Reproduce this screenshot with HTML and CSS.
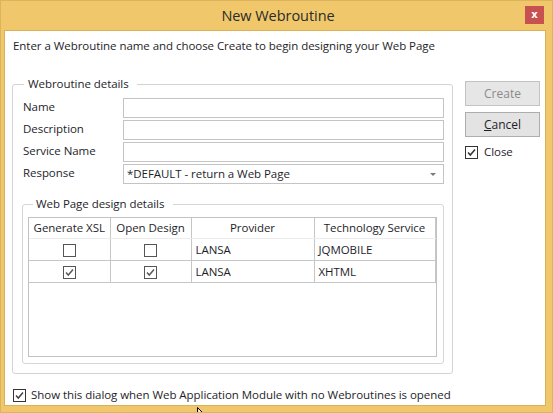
FILE: index.html
```html
<!DOCTYPE html>
<html>
<head>
<meta charset="utf-8">
<link rel="stylesheet" href="styles.css">
</head>
<body>
<div class="window">
  <div class="titlebar">
    <span></span>
    <span class="title">New Webroutine</span>
    <button class="close">x</button>
  </div>
  <div class="client">
    <p class="intro">Enter a Webroutine name and choose Create to begin designing your Web Page</p>
    <div class="main">
      <fieldset class="group outer">
        <legend>Webroutine details</legend>
        <div class="form">
          <span class="lbl">Name</span><div class="input"></div>
          <span class="lbl">Description</span><div class="input"></div>
          <span class="lbl">Service Name</span><div class="input"></div>
          <span class="lbl">Response</span>
          <div class="input combo"><span>*DEFAULT - return a Web Page</span><span class="arrow"></span></div>
        </div>
        <fieldset class="group inner">
          <legend>Web Page design details</legend>
          <div class="grid">
            <table>
              <colgroup><col class="c1"><col class="c2"><col class="c3"><col class="c4"></colgroup>
              <thead>
                <tr><th>Generate XSL</th><th>Open Design</th><th>Provider</th><th>Technology Service</th></tr>
              </thead>
              <tbody>
                <tr>
                  <td class="ck"><span class="box"></span></td>
                  <td class="ck"><span class="box"></span></td>
                  <td>LANSA</td><td>JQMOBILE</td>
                </tr>
                <tr>
                  <td class="ck"><span class="box"><svg viewBox="0 0 11 11" width="11" height="11"><path d="M2 5.5 L4.3 8 L9 2.5" fill="none" stroke="#5a5a5a" stroke-width="1.5"/></svg></span></td>
                  <td class="ck"><span class="box"><svg viewBox="0 0 11 11" width="11" height="11"><path d="M2 5.5 L4.3 8 L9 2.5" fill="none" stroke="#5a5a5a" stroke-width="1.5"/></svg></span></td>
                  <td>LANSA</td><td>XHTML</td>
                </tr>
              </tbody>
            </table>
          </div>
        </fieldset>
      </fieldset>
      <div class="actions">
        <button class="btn disabled">Create</button>
        <button class="btn"><u>C</u>ancel</button>
        <div class="check"><span class="box dark"><svg viewBox="0 0 11 11" width="11" height="11"><path d="M2 5.5 L4.3 8 L9 2.5" fill="none" stroke="#333" stroke-width="1.5"/></svg></span>Close</div>
      </div>
    </div>
    <div class="check bottom"><span class="box dark"><svg viewBox="0 0 11 11" width="11" height="11"><path d="M2 5.5 L4.3 8 L9 2.5" fill="none" stroke="#444" stroke-width="1.5"/></svg></span>Show this dialog when Web Application Module with no Webroutines is opened</div>
  </div>
  <svg class="cursor" width="12" height="8" viewBox="0 0 12 8"><path d="M0.5 0.5 L0.5 8 M0.5 0.5 L7 7" fill="#fff" stroke="#000" stroke-width="1"/><path d="M1.5 2 L1.5 8 L5.5 8 Z" fill="#fff"/></svg>
</div>
</body>
</html>
```
FILE: styles.css
```css
html, body {
  margin: 0;
  padding: 0;
}
body {
  font-family: "Open Sans", "Noto Sans", sans-serif;
  font-size: 11.5px;
  letter-spacing: -0.05px;
  color: #1e1e2a;
  background: #f0c86b;
}
.window {
  position: relative;
  width: 553px;
  height: 413px;
  box-sizing: border-box;
  background: #f0c86b;
  border: 1px solid #dcb45e;
  padding: 0 6px 6px 3px;
  display: flex;
  flex-direction: column;
  overflow: hidden;
}
.titlebar {
  height: 29px;
  flex: none;
  display: grid;
  grid-template-columns: 1fr auto 1fr;
  align-items: start;
}
.title {
  font-size: 14.5px;
  line-height: 20px;
  margin-top: 5px;
  color: #2b2b2b;
  margin-left: 6px;
}
.close {
  justify-self: end;
  margin: 5px 2px 0 0;
  width: 19px;
  height: 18px;
  border: none;
  padding: 0;
  background: #c75050;
  color: #fff;
  font-family: "DejaVu Sans", sans-serif;
  font-weight: bold;
  font-size: 10px;
  line-height: 16px;
}
.client {
  flex: 1;
  background: #fff;
  border: 1px solid #d9b15a;
  display: flex;
  flex-direction: column;
}
.intro {
  margin: 0;
  padding: 7px 8px 0 8px;
  line-height: 16px;
  white-space: nowrap;
}
.main {
  display: flex;
  align-items: flex-start;
  margin: 22px 0 0 7px;
}
.group {
  margin: 0;
  border: 1px solid #d3d3d3;
  border-radius: 3px;
  min-width: 0;
}
.group legend {
  line-height: 16px;
}
.outer {
  box-sizing: border-box;
  width: 441px;
  padding: 6px 8px 9px 9px;
}
.outer > legend {
  padding: 0 8px 0 4px;
  margin-left: 2px;
}
.inner {
  margin-top: 12px;
  padding: 5px 7px 6px 5px;
  border-color: #d6d6d6;
}
.inner > legend {
  padding: 0 9px 0 3px;
  margin-left: 5px;
}
.form {
  display: grid;
  grid-template-columns: 101px 321px;
  row-gap: 2px;
}
.lbl {
  padding-left: 1px;
  line-height: 18px;
}
.input {
  box-sizing: border-box;
  height: 20px;
  border: 1px solid #c4c4c4;
  background: #fff;
}
.combo {
  display: flex;
  align-items: center;
  justify-content: space-between;
  padding: 0 7px 0 3px;
  line-height: 18px;
}
.arrow {
  width: 0;
  height: 0;
  border-left: 3px solid transparent;
  border-right: 3px solid transparent;
  border-top: 3px solid #7a7a7a;
}
.grid {
  box-sizing: border-box;
  width: 409px;
  height: 140px;
  border: 1px solid #c2c2c2;
}
table {
  border-collapse: collapse;
  table-layout: fixed;
  width: 406px;
}
col.c1, col.c2 { width: 81px; }
col.c3 { width: 123px; }
col.c4 { width: 121px; }
th, td {
  padding: 0;
  border-right: 1px solid #c6c6c6;
  white-space: nowrap;
}
th {
  font-weight: normal;
  height: 20px;
  line-height: 18px;
  border-bottom: 1px solid #ececec;
  text-align: center;
}
td {
  height: 21px;
  border-bottom: 1px solid #c6c6c6;
  padding-left: 4px;
  line-height: 18px;
}
td.ck {
  padding: 0;
  text-align: center;
}
.box {
  box-sizing: border-box;
  display: inline-flex;
  align-items: center;
  justify-content: center;
  width: 13px;
  height: 13px;
  border: 1px solid #555;
  background: #fff;
  vertical-align: middle;
}
.box.dark {
  border-color: #333;
}
.actions {
  margin: 5px 0 0 12px;
  display: flex;
  flex-direction: column;
  align-items: flex-start;
}
.btn {
  width: 75px;
  height: 25px;
  margin: 0 0 6px 0;
  padding: 0;
  background: #e3e3e3;
  border: 1px solid #adadad;
  font-family: inherit;
  font-size: 12px;
  color: #1e1e2a;
}
.btn.disabled {
  color: #8a8a8a;
  border-color: #c3c3c3;
  background: #e6e6e6;
}
.check {
  display: flex;
  align-items: center;
  gap: 6px;
  line-height: 16px;
  margin-top: 1px;
}
.bottom {
  margin: 13px 0 0 8px;
  gap: 5px;
  white-space: nowrap;
}
.cursor {
  position: absolute;
  left: 196px;
  top: 406px;
}
```
